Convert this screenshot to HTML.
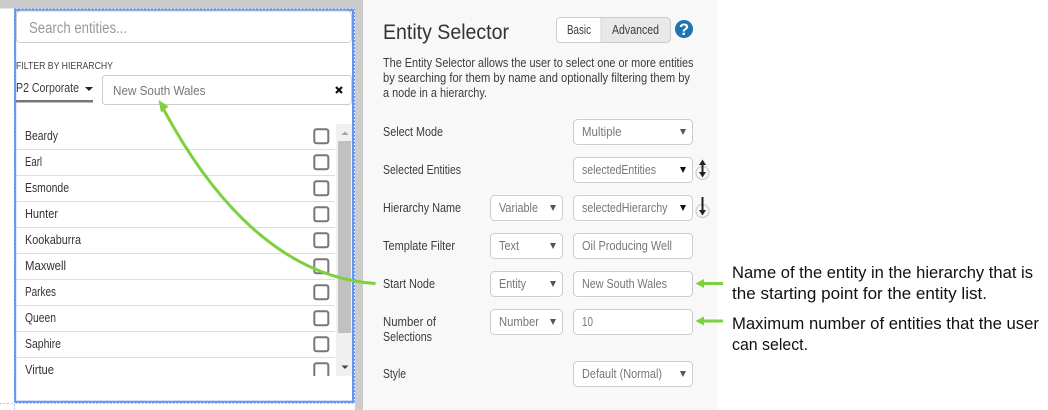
<!DOCTYPE html>
<html><head><meta charset="utf-8"><style>
html,body{margin:0;padding:0;background:#fff;width:1048px;height:410px;overflow:hidden}
svg{display:block;font-family:"Liberation Sans",sans-serif}
.l{font-size:12.5px;fill:#3c3c3c}
.i{font-size:12.5px;fill:#777}
.r{font-size:12.5px;fill:#333}
.a{font-size:16.5px;fill:#111}
.b{fill:#fff;stroke:#ccc;stroke-width:1}
</style></head><body>
<svg width="1048" height="410" viewBox="0 0 1048 410" xmlns="http://www.w3.org/2000/svg">
<rect x="0" y="0" width="363" height="8.5" fill="#ccc"/>
<rect x="355" y="0" width="8" height="410" fill="#ccc"/>
<rect x="363" y="0" width="355" height="410" fill="#f8f8f8"/>
<rect x="15" y="10" width="338" height="392" fill="#fff"/>
<rect x="15.2" y="10.2" width="337.8" height="391.5" fill="none" stroke="#6495ed" stroke-width="2"/>
<rect x="14.5" y="9" width="340" height="394" fill="none" stroke="#6495ed" stroke-width="1" stroke-dasharray="2 1.5"/>
<line x1="0" y1="403.5" x2="14" y2="403.5" stroke="#a9c4f5" stroke-dasharray="2 1.5"/>
<line x1="14.5" y1="404" x2="14.5" y2="410" stroke="#a9c4f5" stroke-dasharray="2 1.5"/>

<rect x="16.5" y="11" width="335" height="31.5" rx="4" class="b"/>
<text x="29" y="33" font-size="15.5" fill="#999" textLength="98" lengthAdjust="spacingAndGlyphs">Search entities...</text>
<text x="16" y="69" font-size="10" fill="#444" textLength="97" lengthAdjust="spacingAndGlyphs">FILTER BY HIERARCHY</text>
<text x="16" y="92" class="l" textLength="63" lengthAdjust="spacingAndGlyphs">P2 Corporate</text>
<path d="M85 87h8l-4 4z" fill="#222"/>
<rect x="16" y="100" width="77" height="2.500" fill="#777"/>
<rect x="102.500" y="75.500" width="249" height="29" rx="3" class="b"/>
<text x="113" y="95" class="i" textLength="92.500" lengthAdjust="spacingAndGlyphs">New South Wales</text>
<path d="M336 87l6 6M342 87l-6 6" stroke="#111" stroke-width="2.200"/>

<g stroke="#ddd" stroke-width="1">
<line x1="16" x2="335" y1="149.500" y2="149.500"/><line x1="16" x2="335" y1="175.500" y2="175.500"/>
<line x1="16" x2="335" y1="201.500" y2="201.500"/><line x1="16" x2="335" y1="227.500" y2="227.500"/>
<line x1="16" x2="335" y1="253.500" y2="253.500"/><line x1="16" x2="335" y1="279.500" y2="279.500"/>
<line x1="16" x2="335" y1="305.500" y2="305.500"/><line x1="16" x2="335" y1="331.500" y2="331.500"/>
<line x1="16" x2="335" y1="357.500" y2="357.500"/>
</g>
<g>
<text class="r" x="25" y="140" textLength="33" lengthAdjust="spacingAndGlyphs">Beardy</text>
<text class="r" x="25" y="166" textLength="17" lengthAdjust="spacingAndGlyphs">Earl</text>
<text class="r" x="25" y="192" textLength="44" lengthAdjust="spacingAndGlyphs">Esmonde</text>
<text class="r" x="25" y="218" textLength="33" lengthAdjust="spacingAndGlyphs">Hunter</text>
<text class="r" x="25" y="244" textLength="56" lengthAdjust="spacingAndGlyphs">Kookaburra</text>
<text class="r" x="25" y="270" textLength="41" lengthAdjust="spacingAndGlyphs">Maxwell</text>
<text class="r" x="25" y="296" textLength="31" lengthAdjust="spacingAndGlyphs">Parkes</text>
<text class="r" x="25" y="322" textLength="31" lengthAdjust="spacingAndGlyphs">Queen</text>
<text class="r" x="25" y="348" textLength="36" lengthAdjust="spacingAndGlyphs">Saphire</text>
<text class="r" x="25" y="374" textLength="29" lengthAdjust="spacingAndGlyphs">Virtue</text>
</g>
<g fill="none" stroke="#777" stroke-width="2">
<rect x="314.300" y="129.300" width="14" height="14" rx="2"/>
<rect x="314.300" y="155.300" width="14" height="14" rx="2"/>
<rect x="314.300" y="181.300" width="14" height="14" rx="2"/>
<rect x="314.300" y="207.300" width="14" height="14" rx="2"/>
<rect x="314.300" y="233.300" width="14" height="14" rx="2"/>
<rect x="314.300" y="259.300" width="14" height="14" rx="2"/>
<rect x="314.300" y="285.300" width="14" height="14" rx="2"/>
<rect x="314.300" y="311.300" width="14" height="14" rx="2"/>
<rect x="314.300" y="337.300" width="14" height="14" rx="2"/>
<path d="M314.300 376v-10.700a2 2 0 0 1 2-2h10a2 2 0 0 1 2 2v10.700"/>
</g>
<rect x="336" y="124" width="16" height="252" fill="#f0f0f0"/>
<rect x="338" y="141" width="13" height="192" fill="#c1c1c1"/>
<path d="M341.500 135l3.500-3.500 3.500 3.500z" fill="#a3a3a3"/>
<path d="M341.500 365.500h7l-3.500 3.500z" fill="#444"/>

<text x="383" y="39" font-size="21.500" fill="#333" textLength="126" lengthAdjust="spacingAndGlyphs">Entity Selector</text>
<rect x="556.500" y="17.500" width="114" height="25" rx="4" fill="#e8e8e8" stroke="#ccc"/>
<path d="M601 18h-40.500a3.500 3.500 0 0 0-3.500 3.500v17a3.500 3.500 0 0 0 3.500 3.500h40.500z" fill="#fff"/>
<line x1="601" y1="18" x2="601" y2="42" stroke="#d5d5d5"/>
<text x="567" y="34" class="l" textLength="24" lengthAdjust="spacingAndGlyphs">Basic</text>
<text x="612" y="34" class="l" textLength="47" lengthAdjust="spacingAndGlyphs">Advanced</text>
<circle cx="684" cy="29" r="9" fill="#1f75b4"/>
<text x="684" y="35" font-size="16.500" font-weight="bold" fill="#fff" text-anchor="middle">?</text>

<text x="383" y="67" class="l" textLength="310.500" lengthAdjust="spacingAndGlyphs">The Entity Selector allows the user to select one or more entities</text>
<text x="383" y="82" class="l" textLength="307" lengthAdjust="spacingAndGlyphs">by searching for them by name and optionally filtering them by</text>
<text x="383" y="97" class="l" textLength="104" lengthAdjust="spacingAndGlyphs">a node in a hierarchy.</text>

<text x="383" y="136" class="l" textLength="60" lengthAdjust="spacingAndGlyphs">Select Mode</text>
<text x="383" y="174" class="l" textLength="78" lengthAdjust="spacingAndGlyphs">Selected Entities</text>
<text x="383" y="212" class="l" textLength="78" lengthAdjust="spacingAndGlyphs">Hierarchy Name</text>
<text x="383" y="250" class="l" textLength="72" lengthAdjust="spacingAndGlyphs">Template Filter</text>
<text x="383" y="288" class="l" textLength="52" lengthAdjust="spacingAndGlyphs">Start Node</text>
<text x="383" y="326" class="l" textLength="53" lengthAdjust="spacingAndGlyphs">Number of</text>
<text x="383" y="341" class="l" textLength="49" lengthAdjust="spacingAndGlyphs">Selections</text>
<text x="383" y="378" class="l" textLength="23" lengthAdjust="spacingAndGlyphs">Style</text>

<rect x="573.500" y="119.500" width="119" height="25" rx="4" class="b"/>
<rect x="573.500" y="157.500" width="119" height="25" rx="4" class="b"/>
<rect x="573.500" y="195.500" width="119" height="25" rx="4" class="b"/>
<rect x="573.500" y="233.500" width="119" height="25" rx="4" class="b"/>
<rect x="573.500" y="271.500" width="119" height="25" rx="4" class="b"/>
<rect x="573.500" y="309.500" width="119" height="25" rx="4" class="b"/>
<rect x="573.500" y="361.500" width="119" height="25" rx="4" class="b"/>
<rect x="490.500" y="195.500" width="72" height="25" rx="4" class="b"/>
<rect x="490.500" y="233.500" width="72" height="25" rx="4" class="b"/>
<rect x="490.500" y="271.500" width="72" height="25" rx="4" class="b"/>
<rect x="490.500" y="309.500" width="72" height="25" rx="4" class="b"/>

<text x="582" y="136" class="i" textLength="39.500" lengthAdjust="spacingAndGlyphs">Multiple</text>
<text x="582" y="174" class="i" textLength="74" lengthAdjust="spacingAndGlyphs">selectedEntities</text>
<text x="582" y="212" class="i" textLength="85.500" lengthAdjust="spacingAndGlyphs">selectedHierarchy</text>
<text x="582" y="250" class="i" textLength="90" lengthAdjust="spacingAndGlyphs">Oil Producing Well</text>
<text x="582" y="288" class="i" textLength="85" lengthAdjust="spacingAndGlyphs">New South Wales</text>
<text x="582" y="326" class="i" textLength="11" lengthAdjust="spacingAndGlyphs">10</text>
<text x="582" y="378" class="i" textLength="80" lengthAdjust="spacingAndGlyphs">Default (Normal)</text>
<text x="499" y="212" class="i" textLength="39" lengthAdjust="spacingAndGlyphs">Variable</text>
<text x="499" y="250" class="i" textLength="20" lengthAdjust="spacingAndGlyphs">Text</text>
<text x="499" y="288" class="i" textLength="27" lengthAdjust="spacingAndGlyphs">Entity</text>
<text x="499" y="326" class="i" textLength="40" lengthAdjust="spacingAndGlyphs">Number</text>

<g fill="#555">
<path d="M680 129h6l-3 6z"/>
<path d="M680 371h6l-3 6z"/>
<path d="M550 205h6l-3 6z"/>
<path d="M550 243h6l-3 6z"/>
<path d="M550 281h6l-3 6z"/>
<path d="M550 319h6l-3 6z"/>
</g>
<g fill="#111">
<path d="M680 167h6l-3 6z"/>
<path d="M680 205h6l-3 6z"/>
</g>

<circle cx="702.500" cy="173" r="6.500" fill="none" stroke="#ccc" stroke-width="1.200"/>
<circle cx="702.500" cy="211" r="6.500" fill="none" stroke="#ccc" stroke-width="1.200"/>
<path d="M702.500 161v14" stroke="#222" stroke-width="2"/>
<path d="M699 165l3.500-5.500 3.500 5.500zM699 172l3.500 5.500 3.500-5.500z" fill="#222"/>
<path d="M702.500 197v15" stroke="#222" stroke-width="2"/>
<path d="M699 210l3.500 5.500 3.500-5.500z" fill="#222"/>

<path d="M375.500 283.500C285 278 215 205 164 110" fill="none" stroke="#7ed03f" stroke-width="3"/>
<path d="M158.500 100l10 6.500-7.500 6z" fill="#7ed03f"/>
<path d="M723 283.500h-22" stroke="#7ed03f" stroke-width="3"/>
<path d="M695.500 283.500l8.500-4.500v9z" fill="#7ed03f"/>
<path d="M723 321h-22" stroke="#7ed03f" stroke-width="3"/>
<path d="M695.500 321l8.500-4.500v9z" fill="#7ed03f"/>

<text x="732" y="278" class="a" textLength="301" lengthAdjust="spacingAndGlyphs">Name of the entity in the hierarchy that is</text>
<text x="732" y="299" class="a" textLength="255" lengthAdjust="spacingAndGlyphs">the starting point for the entity list.</text>
<text x="732" y="329" class="a" textLength="307" lengthAdjust="spacingAndGlyphs">Maximum number of entities that the user</text>
<text x="732" y="350" class="a" textLength="76" lengthAdjust="spacingAndGlyphs">can select.</text>
</svg>
</body></html>
